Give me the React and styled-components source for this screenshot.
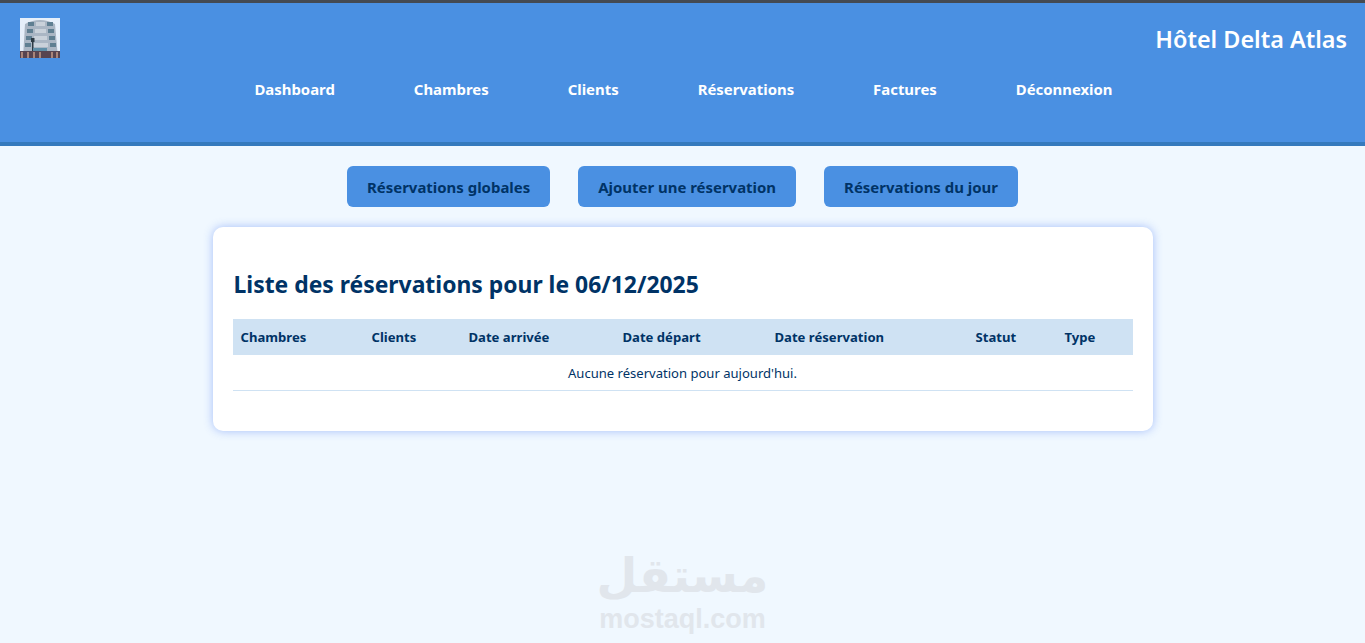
import React from 'react';
import styled, { createGlobalStyle } from 'styled-components';

const Global = createGlobalStyle`
  html, body { margin: 0; padding: 0; }
  body {
    background: #f0f8ff;
    font-family: "Noto Sans", "Open Sans", "Liberation Sans", sans-serif;
    color: #003366;
  }
`;

const Page = styled.div`
  min-height: 643px;
  position: relative;
  overflow: hidden;
`;

const Header = styled.header`
  box-sizing: border-box;
  height: 146px;
  background: #4a90e2;
  border-top: 3px solid #444a52;
  border-bottom: 4px solid #357abd;
  padding: 15px 18px 0 20px;
`;

const TopRow = styled.div`
  display: flex;
  justify-content: space-between;
  align-items: flex-start;
  height: 40px;
`;

const HotelName = styled.h1`
  margin: 6px 0 0;
  font-size: 23.4px;
  line-height: 30px;
  font-weight: 600;
  color: #fff;
`;

const Nav = styled.nav`
  display: flex;
  justify-content: center;
  gap: 79px;
  margin-top: 20px;
`;

const NavLink = styled.a`
  font-size: 14.9px;
  line-height: 22px;
  font-weight: 700;
  color: #fff;
  text-decoration: none;
`;

const Actions = styled.div`
  display: flex;
  justify-content: center;
  gap: 28px;
  margin-top: 20px;
`;

const ActionButton = styled.a`
  box-sizing: border-box;
  height: 41px;
  padding: 0 20px;
  display: flex;
  align-items: center;
  background: #4a90e2;
  border-radius: 6px;
  font-size: 14.95px;
  font-weight: 700;
  color: #003366;
  text-decoration: none;
`;

const Card = styled.section`
  box-sizing: border-box;
  width: 940px;
  height: 204px;
  margin: 20px auto 0;
  padding: 41px 20px 0;
  background: #fff;
  border-radius: 10px;
  box-shadow: 0 0 10px rgba(60, 110, 240, 0.42);
`;

const Title = styled.h2`
  margin: 0 0 17px 1px;
  font-size: 22.9px;
  line-height: 34px;
  font-weight: 700;
  color: #003366;
`;

const Table = styled.table`
  width: 900px;
  table-layout: fixed;
  border-collapse: collapse;
`;

const Th = styled.th`
  width: ${p => p.$w}px;
  height: 36px;
  padding: 0 8px;
  box-sizing: border-box;
  background: #cfe2f3;
  text-align: left;
  font-size: 13.1px;
  font-weight: 700;
  color: #003366;
`;

const Td = styled.td`
  height: 35px;
  padding: 2px 8px 0;
  box-sizing: border-box;
  border-bottom: 1px solid #cfe2f3;
  text-align: center;
  font-size: 13.05px;
  color: #003366;
`;

const Watermark = styled.div`
  position: absolute;
  left: 600px;
  top: 548px;
  width: 165px;
  display: flex;
  flex-direction: column;
  align-items: center;
  color: #e1e6ec;
  pointer-events: none;
`;

const WatermarkArabic = styled.div`
  font-family: "DejaVu Sans", sans-serif;
  font-weight: 700;
  font-size: 47px;
  line-height: 55px;
  white-space: nowrap;
`;

const WatermarkLatin = styled.div`
  margin-top: 1px;
  font-family: "Liberation Sans", sans-serif;
  font-weight: 700;
  font-size: 27px;
  line-height: 31px;
  white-space: nowrap;
`;

function BuildingLogo() {
  const floors = [
    { y: 4, l: 8, r: 31 },
    { y: 11, l: 7, r: 32 },
    { y: 18, l: 6, r: 33 },
    { y: 25, l: 5, r: 34 },
  ];
  return (
    <svg width="40" height="40" viewBox="0 0 40 40" aria-hidden="true">
      <rect width="40" height="40" fill="#e6effa" />
      <path d="M3 40 L5 6 Q20 -2 35 6 L38 40 Z" fill="#aab6c4" />
      {floors.map(({ y, l, r }) => (
        <g key={y}>
          <rect x={l} y={y} width="6" height="4" fill="#5f7f92" />
          <rect x={l + 8} y={y} width={r - l - 14} height="4" fill="#c9d1da" />
          <rect x={r - 4} y={y} width="6" height="4" fill="#5f7f92" />
        </g>
      ))}
      <rect x="12" y="20" width="1.5" height="14" fill="#2d3a44" />
      <rect x="11" y="20" width="3.5" height="4" fill="#2d3a44" />
      <rect x="13" y="30" width="14" height="3" fill="#5f8fa8" />
      <rect x="0" y="33" width="40" height="7" fill="#574450" />
      {[1, 7, 13, 19, 31, 36].map(x => (
        <rect key={x} x={x} y="34" width="2" height="6" fill="#a9857a" />
      ))}
    </svg>
  );
}

const links = ['Dashboard', 'Chambres', 'Clients', 'Réservations', 'Factures', 'Déconnexion'];
const actions = ['Réservations globales', 'Ajouter une réservation', 'Réservations du jour'];
const columns = [
  ['Chambres', 131],
  ['Clients', 97],
  ['Date arrivée', 154],
  ['Date départ', 152],
  ['Date réservation', 201],
  ['Statut', 89],
  ['Type', 76],
];

export default function App() {
  return (
    <Page>
      <Global />
      <Header>
        <TopRow>
          <BuildingLogo />
          <HotelName>Hôtel Delta Atlas</HotelName>
        </TopRow>
        <Nav>
          {links.map(l => <NavLink key={l} href="#">{l}</NavLink>)}
        </Nav>
      </Header>
      <Actions>
        {actions.map(a => <ActionButton key={a} href="#">{a}</ActionButton>)}
      </Actions>
      <Card>
        <Title>Liste des réservations pour le 06/12/2025</Title>
        <Table>
          <thead>
            <tr>
              {columns.map(([name, w]) => <Th key={name} $w={w}>{name}</Th>)}
            </tr>
          </thead>
          <tbody>
            <tr>
              <Td colSpan={7}>Aucune réservation pour aujourd'hui.</Td>
            </tr>
          </tbody>
        </Table>
      </Card>
      <Watermark>
        <WatermarkArabic>مستقل</WatermarkArabic>
        <WatermarkLatin>mostaql.com</WatermarkLatin>
      </Watermark>
    </Page>
  );
}
